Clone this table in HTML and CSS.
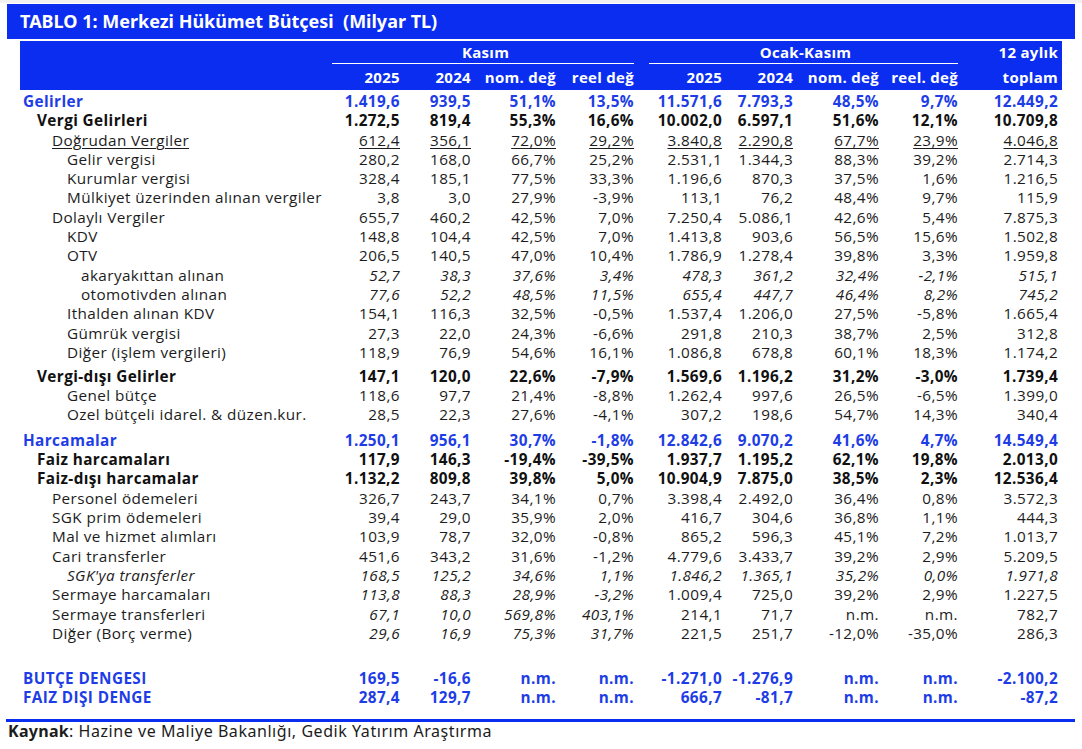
FILE: index.html
```html
<!DOCTYPE html>
<html lang="tr">
<head>
<meta charset="utf-8">
<title>TABLO 1</title>
<link rel="stylesheet" href="styles.css">
</head>
<body>
<div class="page">
  <div class="titlebar">TABLO 1: Merkezi Hükümet Bütçesi&nbsp; (Milyar TL)</div>
  <table class="tbl">
    <colgroup>
      <col class="c-label"><col class="c1"><col class="c2"><col class="c3"><col class="c4"><col class="c5"><col class="c6"><col class="c7"><col class="c8"><col class="c9">
    </colgroup>
    <thead>
      <tr class="h1">
        <th></th>
        <th colspan="4"><div class="grp grp-k">Kasım</div></th>
        <th colspan="4"><div class="grp grp-o">Ocak-Kasım</div></th>
        <th class="r">12 aylık</th>
      </tr>
      <tr class="h2">
        <th></th>
        <th class="r">2025</th><th class="r">2024</th><th class="r">nom. değ</th><th class="r">reel değ</th>
        <th class="r">2025</th><th class="r">2024</th><th class="r">nom. değ</th><th class="r">reel. değ</th>
        <th class="r">toplam</th>
      </tr>
    </thead>
    <tbody>
      <tr class="top blue"><td class="l0">Gelirler</td><td>1.419,6</td><td>939,5</td><td>51,1%</td><td>13,5%</td><td>11.571,6</td><td>7.793,3</td><td>48,5%</td><td>9,7%</td><td>12.449,2</td></tr>
      <tr class="bold"><td class="l1">Vergi Gelirleri</td><td>1.272,5</td><td>819,4</td><td>55,3%</td><td>16,6%</td><td>10.002,0</td><td>6.597,1</td><td>51,6%</td><td>12,1%</td><td>10.709,8</td></tr>
      <tr class="ul"><td class="l2"><span>Doğrudan Vergiler</span></td><td><span>612,4</span></td><td><span>356,1</span></td><td><span>72,0%</span></td><td><span>29,2%</span></td><td><span>3.840,8</span></td><td><span>2.290,8</span></td><td><span>67,7%</span></td><td><span>23,9%</span></td><td><span>4.046,8</span></td></tr>
      <tr><td class="l3">Gelir vergisi</td><td>280,2</td><td>168,0</td><td>66,7%</td><td>25,2%</td><td>2.531,1</td><td>1.344,3</td><td>88,3%</td><td>39,2%</td><td>2.714,3</td></tr>
      <tr><td class="l3">Kurumlar vergisi</td><td>328,4</td><td>185,1</td><td>77,5%</td><td>33,3%</td><td>1.196,6</td><td>870,3</td><td>37,5%</td><td>1,6%</td><td>1.216,5</td></tr>
      <tr><td class="l3">Mülkiyet üzerinden alınan vergiler</td><td>3,8</td><td>3,0</td><td>27,9%</td><td>-3,9%</td><td>113,1</td><td>76,2</td><td>48,4%</td><td>9,7%</td><td>115,9</td></tr>
      <tr><td class="l2">Dolaylı Vergiler</td><td>655,7</td><td>460,2</td><td>42,5%</td><td>7,0%</td><td>7.250,4</td><td>5.086,1</td><td>42,6%</td><td>5,4%</td><td>7.875,3</td></tr>
      <tr><td class="l3">KDV</td><td>148,8</td><td>104,4</td><td>42,5%</td><td>7,0%</td><td>1.413,8</td><td>903,6</td><td>56,5%</td><td>15,6%</td><td>1.502,8</td></tr>
      <tr><td class="l3">OTV</td><td>206,5</td><td>140,5</td><td>47,0%</td><td>10,4%</td><td>1.786,9</td><td>1.278,4</td><td>39,8%</td><td>3,3%</td><td>1.959,8</td></tr>
      <tr class="itn"><td class="l4">akaryakıttan alınan</td><td>52,7</td><td>38,3</td><td>37,6%</td><td>3,4%</td><td>478,3</td><td>361,2</td><td>32,4%</td><td>-2,1%</td><td>515,1</td></tr>
      <tr class="itn"><td class="l4">otomotivden alınan</td><td>77,6</td><td>52,2</td><td>48,5%</td><td>11,5%</td><td>655,4</td><td>447,7</td><td>46,4%</td><td>8,2%</td><td>745,2</td></tr>
      <tr><td class="l3">Ithalden alınan KDV</td><td>154,1</td><td>116,3</td><td>32,5%</td><td>-0,5%</td><td>1.537,4</td><td>1.206,0</td><td>27,5%</td><td>-5,8%</td><td>1.665,4</td></tr>
      <tr><td class="l3">Gümrük vergisi</td><td>27,3</td><td>22,0</td><td>24,3%</td><td>-6,6%</td><td>291,8</td><td>210,3</td><td>38,7%</td><td>2,5%</td><td>312,8</td></tr>
      <tr><td class="l3">Diğer (işlem vergileri)</td><td>118,9</td><td>76,9</td><td>54,6%</td><td>16,1%</td><td>1.086,8</td><td>678,8</td><td>60,1%</td><td>18,3%</td><td>1.174,2</td></tr>
      <tr class="sp sp5"><td colspan="10"></td></tr>
      <tr class="bold"><td class="l1">Vergi-dışı Gelirler</td><td>147,1</td><td>120,0</td><td>22,6%</td><td>-7,9%</td><td>1.569,6</td><td>1.196,2</td><td>31,2%</td><td>-3,0%</td><td>1.739,4</td></tr>
      <tr><td class="l3">Genel bütçe</td><td>118,6</td><td>97,7</td><td>21,4%</td><td>-8,8%</td><td>1.262,4</td><td>997,6</td><td>26,5%</td><td>-6,5%</td><td>1.399,0</td></tr>
      <tr><td class="l3">Ozel bütçeli idarel. &amp; düzen.kur.</td><td>28,5</td><td>22,3</td><td>27,6%</td><td>-4,1%</td><td>307,2</td><td>198,6</td><td>54,7%</td><td>14,3%</td><td>340,4</td></tr>
      <tr class="sp sp7"><td colspan="10"></td></tr>
      <tr class="blue"><td class="l0">Harcamalar</td><td>1.250,1</td><td>956,1</td><td>30,7%</td><td>-1,8%</td><td>12.842,6</td><td>9.070,2</td><td>41,6%</td><td>4,7%</td><td>14.549,4</td></tr>
      <tr class="bold"><td class="l1">Faiz harcamaları</td><td>117,9</td><td>146,3</td><td>-19,4%</td><td>-39,5%</td><td>1.937,7</td><td>1.195,2</td><td>62,1%</td><td>19,8%</td><td>2.013,0</td></tr>
      <tr class="bold"><td class="l1">Faiz-dışı harcamalar</td><td>1.132,2</td><td>809,8</td><td>39,8%</td><td>5,0%</td><td>10.904,9</td><td>7.875,0</td><td>38,5%</td><td>2,3%</td><td>12.536,4</td></tr>
      <tr><td class="l2">Personel ödemeleri</td><td>326,7</td><td>243,7</td><td>34,1%</td><td>0,7%</td><td>3.398,4</td><td>2.492,0</td><td>36,4%</td><td>0,8%</td><td>3.572,3</td></tr>
      <tr><td class="l2">SGK prim ödemeleri</td><td>39,4</td><td>29,0</td><td>35,9%</td><td>2,0%</td><td>416,7</td><td>304,6</td><td>36,8%</td><td>1,1%</td><td>444,3</td></tr>
      <tr><td class="l2">Mal ve hizmet alımları</td><td>103,9</td><td>78,7</td><td>32,0%</td><td>-0,8%</td><td>865,2</td><td>596,3</td><td>45,1%</td><td>7,2%</td><td>1.013,7</td></tr>
      <tr><td class="l2">Cari transferler</td><td>451,6</td><td>343,2</td><td>31,6%</td><td>-1,2%</td><td>4.779,6</td><td>3.433,7</td><td>39,2%</td><td>2,9%</td><td>5.209,5</td></tr>
      <tr class="itall"><td class="l3">SGK'ya transferler</td><td>168,5</td><td>125,2</td><td>34,6%</td><td>1,1%</td><td>1.846,2</td><td>1.365,1</td><td>35,2%</td><td>0,0%</td><td>1.971,8</td></tr>
      <tr class="itk"><td class="l2">Sermaye harcamaları</td><td>113,8</td><td>88,3</td><td>28,9%</td><td>-3,2%</td><td>1.009,4</td><td>725,0</td><td>39,2%</td><td>2,9%</td><td>1.227,5</td></tr>
      <tr class="itk"><td class="l2">Sermaye transferleri</td><td>67,1</td><td>10,0</td><td>569,8%</td><td>403,1%</td><td>214,1</td><td>71,7</td><td>n.m.</td><td>n.m.</td><td>782,7</td></tr>
      <tr class="itk"><td class="l2">Diğer (Borç verme)</td><td>29,6</td><td>16,9</td><td>75,3%</td><td>31,7%</td><td>221,5</td><td>251,7</td><td>-12,0%</td><td>-35,0%</td><td>286,3</td></tr>
      <tr class="sp sp25"><td colspan="10"></td></tr>
      <tr class="blue"><td class="l0">BUTÇE DENGESI</td><td>169,5</td><td>-16,6</td><td>n.m.</td><td>n.m.</td><td>-1.271,0</td><td>-1.276,9</td><td>n.m.</td><td>n.m.</td><td>-2.100,2</td></tr>
      <tr class="blue"><td class="l0">FAIZ DIŞI DENGE</td><td>287,4</td><td>129,7</td><td>n.m.</td><td>n.m.</td><td>666,7</td><td>-81,7</td><td>n.m.</td><td>n.m.</td><td>-87,2</td></tr>
    </tbody>
  </table>
  <div class="rule"></div>
  <div class="source"><b>Kaynak</b>: Hazine ve Maliye Bakanlığı, Gedik Yatırım Araştırma</div>
</div>
</body>
</html>
```

FILE: styles.css
```css
* { box-sizing: border-box; }
html, body { margin: 0; padding: 0; background: #ffffff; }
body {
  font-family: "Open Sans", "DejaVu Sans", sans-serif;
  color: #1c1c1c;
}
.page {
  width: 1082px;
  padding: 1px 7px 0 7px;
  border-top: 3px solid #f1f1f1;
}
.titlebar {
  width: 1068px;
  height: 35px;
  background: #0a2df0;
  color: #ffffff;
  font-family: "Noto Sans", "Open Sans", sans-serif;
  font-weight: 700;
  font-size: 18px;
  line-height: 35px;
  padding-left: 13px;
  white-space: pre;
}
.tbl {
  margin-top: 2px;
  margin-left: 13px;
  width: 1042px;
  border-collapse: collapse;
  table-layout: fixed;
  font-size: 15.3px;
  letter-spacing: 0.4px;
}
.c-label { width: 310px; }
.c1 { width: 70px; }
.c2 { width: 71px; }
.c3 { width: 85px; }
.c4 { width: 78px; }
.c5 { width: 88px; }
.c6 { width: 71px; }
.c7 { width: 86px; }
.c8 { width: 79px; }
.c9 { width: 104px; }

thead th {
  background: #0a2df0;
  color: #ffffff;
  font-weight: 700;
  font-size: 15px;
  padding: 0;
  white-space: nowrap;
  letter-spacing: 0.3px;
}
thead .h1 th { height: 24px; vertical-align: top; padding-top: 1px; }
thead .h2 th { height: 25px; vertical-align: middle; padding-bottom: 1px; }
thead th.r { text-align: right; }
thead th:last-child { padding-right: 4px; }
.grp {
  text-align: center;
  border-bottom: 1.5px solid #ffffff;
  height: 22px;
  line-height: 21px;
}
.grp-k { margin-left: 2px; margin-right: -5px; }
.grp-o { margin-left: 15px; margin-right: -4px; }

tbody td {
  height: 19.3px;
  line-height: 19.3px;
  padding: 0;
  text-align: right;
  white-space: nowrap;
}
tbody td:first-child { text-align: left; }
tbody td:last-child { padding-right: 4px; }
tbody tr.top td { padding-top: 2px; height: 21.3px; }
.l0 { padding-left: 3px !important; }
.l1 { padding-left: 17px !important; }
.l2 { padding-left: 32px !important; }
.l3 { padding-left: 47px !important; }
.l4 { padding-left: 61px !important; }

tr.blue td { color: #1e3de6; font-weight: 700; }
tr.bold td { font-weight: 700; color: #111111; }
tr.ul td span { text-decoration: underline; text-underline-offset: 2px; text-decoration-thickness: 1px; }
tr.itn td:not(:first-child) { font-style: italic; }
tr.itall td { font-style: italic; }
tr.itk td:nth-child(n+2):nth-child(-n+5) { font-style: italic; }

tr.sp td { padding: 0; line-height: 0; }
tr.sp5 td { height: 4.7px; }
tr.sp7 td { height: 6.1px; }
tr.sp25 td { height: 25.7px; }

.rule {
  margin-top: 12px;
  width: 1069px;
  margin-left: -1px;
  height: 3px;
  background: #0a2df0;
}
.source {
  margin-top: 0;
  padding-left: 1px;
  font-family: "Noto Sans", "Open Sans", sans-serif;
  font-size: 16px;
  letter-spacing: 0.55px;
  line-height: 19px;
  color: #1c1c1c;
}
.source b { font-weight: 700; letter-spacing: 0.3px; }
```
